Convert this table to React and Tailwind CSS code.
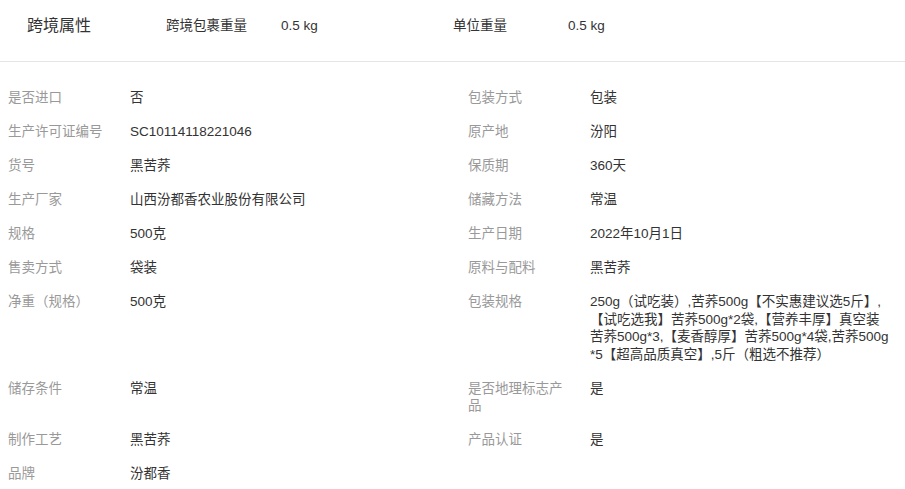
const ROWS = [
  [['是否进口', '否'], ['包装方式', '包装']],
  [['生产许可证编号', 'SC10114118221046'], ['原产地', '汾阳']],
  [['货号', '黑苦荞'], ['保质期', '360天']],
  [['生产厂家', '山西汾都香农业股份有限公司'], ['储藏方法', '常温']],
  [['规格', '500克'], ['生产日期', '2022年10月1日']],
  [['售卖方式', '袋装'], ['原料与配料', '黑苦荞']],
  [['净重（规格）', '500克'], ['包装规格', '250g（试吃装）,苦荞500g【不实惠建议选5斤】,【试吃选我】苦荞500g*2袋,【营养丰厚】真空装苦荞500g*3,【麦香醇厚】苦荞500g*4袋,苦荞500g*5【超高品质真空】,5斤（粗选不推荐）']],
  [['储存条件', '常温'], ['是否地理标志产品', '是']],
  [['制作工艺', '黑苦荞'], ['产品认证', '是']],
  [['品牌', '汾都香'], null],
]

function Cell({ item }) {
  if (!item) return <div />
  return (
    <div className="flex py-[8.25px] pl-2 pr-3">
      <div className="w-[100px] shrink-0 mr-[22px] text-[#999]">{item[0]}</div>
      <div className="flex-1 text-[#333] break-all">{item[1]}</div>
    </div>
  )
}

export default function App() {
  return (
    <div
      className="w-[905px] bg-white text-[13.5px] leading-[17.5px]"
      style={{ fontFamily: '"Liberation Sans", Arial, "Noto Sans CJK SC", sans-serif' }}
    >
      {/* cross-border header */}
      <div className="flex items-center h-[62px] border-b border-[#e5e5e5] pb-[9px]">
        <div className="w-[166px] pl-[27px] text-[16px] text-[#333]">跨境属性</div>
        <div className="w-[115px] text-[#333]">跨境包裹重量</div>
        <div className="w-[172px] text-[#333]">0.5 kg</div>
        <div className="w-[115px] text-[#333]">单位重量</div>
        <div className="text-[#333]">0.5 kg</div>
      </div>

      <div className="grid grid-cols-[460px_1fr] pt-[19px]">
        {ROWS.map((row, i) => (
          <div key={i} className="contents">
            <Cell item={row[0]} />
            <Cell item={row[1]} />
          </div>
        ))}
      </div>
    </div>
  )
}
